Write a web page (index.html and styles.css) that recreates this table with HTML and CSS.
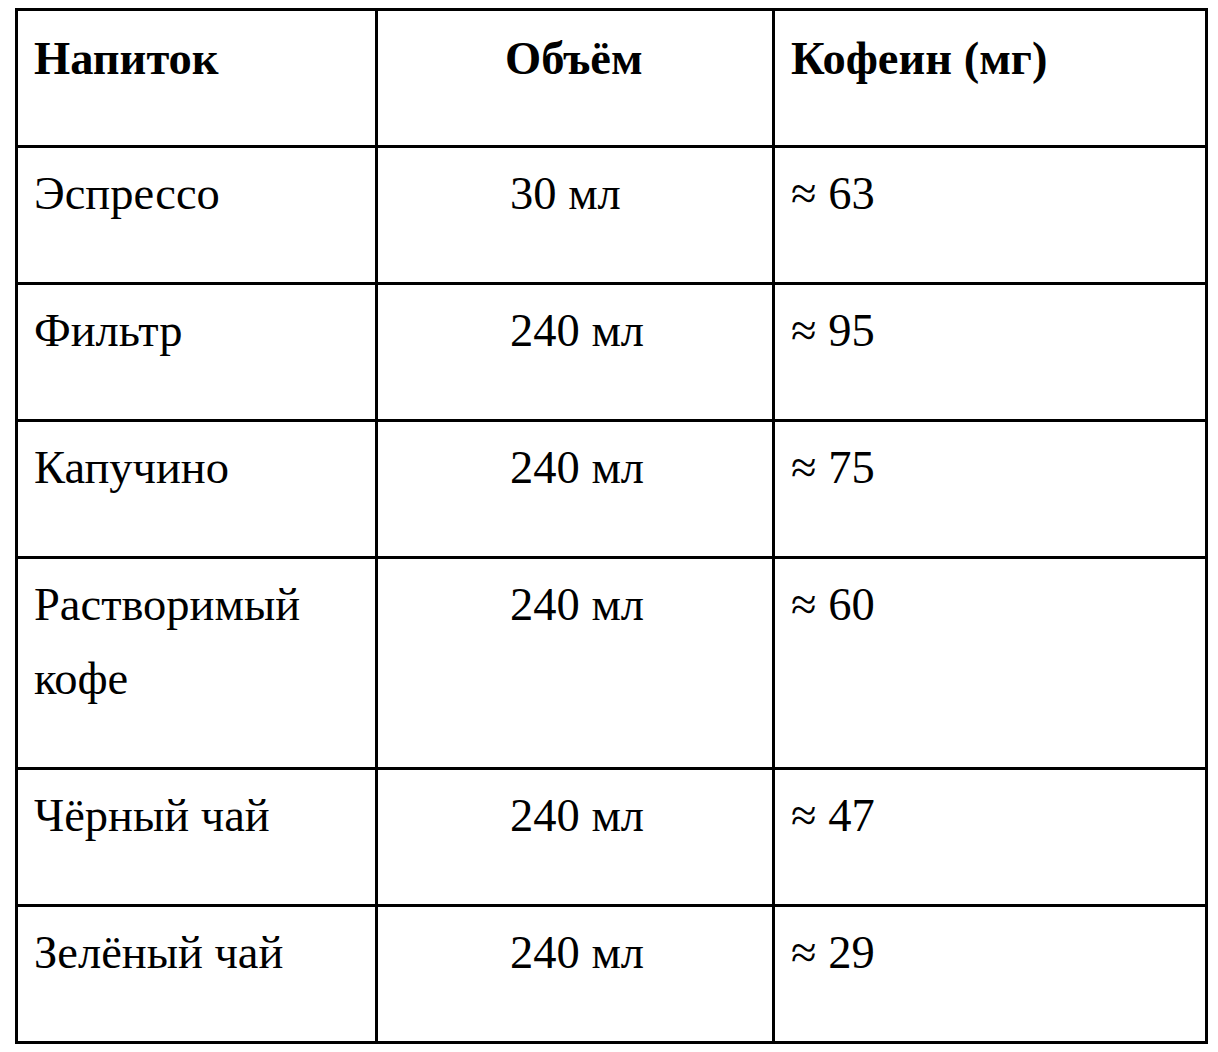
FILE: index.html
```html
<!DOCTYPE html>
<html lang="ru">
<head>
<meta charset="utf-8">
<title>Кофеин в напитках</title>
<link rel="stylesheet" href="styles.css">
</head>
<body>
<table class="caffeine">
  <colgroup>
    <col class="c-drink">
    <col class="c-volume">
    <col class="c-caffeine">
  </colgroup>
  <thead>
    <tr>
      <th class="drink">Напиток</th>
      <th class="volume">Объём</th>
      <th class="caffeine-col">Кофеин (мг)</th>
    </tr>
  </thead>
  <tbody>
    <tr><td class="drink">Эспрессо</td><td class="volume">30 мл</td><td class="caffeine-col">≈ 63</td></tr>
    <tr><td class="drink">Фильтр</td><td class="volume">240 мл</td><td class="caffeine-col">≈ 95</td></tr>
    <tr><td class="drink">Капучино</td><td class="volume">240 мл</td><td class="caffeine-col">≈ 75</td></tr>
    <tr><td class="drink">Растворимый кофе</td><td class="volume">240 мл</td><td class="caffeine-col">≈ 60</td></tr>
    <tr><td class="drink">Чёрный чай</td><td class="volume">240 мл</td><td class="caffeine-col">≈ 47</td></tr>
    <tr><td class="drink">Зелёный чай</td><td class="volume">240 мл</td><td class="caffeine-col">≈ 29</td></tr>
  </tbody>
</table>
</body>
</html>
```
FILE: styles.css
```css
html, body {
  background: #ffffff;
}
body {
  margin: 8px 0 0 15px;
  font-family: "Liberation Serif", "Times New Roman", serif;
  font-size: 46.5px;
  color: #000000;
}
.caffeine {
  border-collapse: collapse;
  table-layout: fixed;
  width: 1193px;
}
.c-drink { width: 360px; }
.c-volume { width: 397px; }
.c-caffeine { width: 433px; }
.caffeine th,
.caffeine td {
  border: 3px solid #000000;
  vertical-align: top;
  text-align: left;
  line-height: 74px;
  padding: 9px 16px 51px 16px;
}
.caffeine th {
  font-weight: bold;
  padding-top: 11px;
  padding-bottom: 49px;
}
.caffeine th.volume {
  padding-left: 127px;
}
.caffeine td.volume {
  padding-left: 132px;
}
```
